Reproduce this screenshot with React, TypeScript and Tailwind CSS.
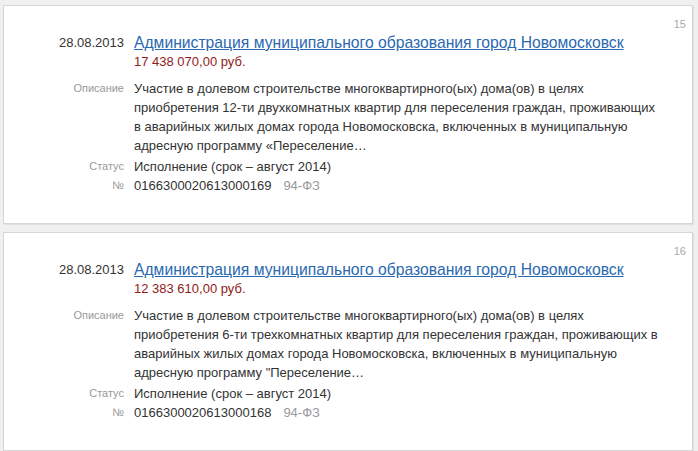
import React from "react";

type Purchase = {
  index: number;
  date: string;
  customer: string;
  price: string;
  description: string;
  status: string;
  number: string;
  law: string;
};

const purchases: Purchase[] = [
  {
    index: 15,
    date: "28.08.2013",
    customer: "Администрация муниципального образования город Новомосковск",
    price: "17 438 070,00 руб.",
    description:
      "Участие в долевом строительстве многоквартирного(ых) дома(ов) в целях приобретения 12-ти двухкомнатных квартир для переселения граждан, проживающих в аварийных жилых домах города Новомосковска, включенных в муниципальную адресную программу «Переселение…",
    status: "Исполнение (срок – август 2014)",
    number: "0166300020613000169",
    law: "94-ФЗ",
  },
  {
    index: 16,
    date: "28.08.2013",
    customer: "Администрация муниципального образования город Новомосковск",
    price: "12 383 610,00 руб.",
    description:
      "Участие в долевом строительстве многоквартирного(ых) дома(ов) в целях приобретения 6-ти трехкомнатных квартир для переселения граждан, проживающих в аварийных жилых домах города Новомосковска, включенных в муниципальную адресную программу \"Переселение…",
    status: "Исполнение (срок – август 2014)",
    number: "0166300020613000168",
    law: "94-ФЗ",
  },
];

function PurchaseCard({ item }: { item: Purchase }) {
  return (
    <div className="relative ml-[3px] mr-[5px] border border-[#d6d6d6] bg-white pt-[27px] pb-[28px] shadow-[1px_1px_1px_rgba(0,0,0,0.06)]">
      <span className="absolute right-[6px] top-[11px] text-[11px] leading-[14px] text-[#a8a8a8]">{item.index}</span>

      <div className="grid grid-cols-[120px_1fr] gap-x-[10px] text-[13px] leading-[19px]">
        {/* Date + customer */}
        <div className="text-right text-[#333]">{item.date}</div>
        <div className="text-[15.7px] leading-[19px]">
          <a href="#" className="text-[#2a68b1] underline">
            {item.customer}
          </a>
        </div>

        <div />
        <div className="text-[#921a1a]">{item.price}</div>

        {/* Description */}
        <div className="mt-[8px] text-right text-[11px] text-[#999]">Описание</div>
        <div className="mt-[8px] w-[530px] text-[#333]">{item.description}</div>

        <div className="mt-[2px] text-right text-[11px] text-[#999]">Статус</div>
        <div className="mt-[2px] text-[#333]">{item.status}</div>

        <div className="text-right text-[11px] text-[#999]">№</div>
        <div className="flex gap-[12px]">
          <span className="text-[#333]">{item.number}</span>
          <span className="text-[#999]">{item.law}</span>
        </div>
      </div>
    </div>
  );
}

export default function App() {
  return (
    <div
      className="flex h-[451px] w-[698px] flex-col gap-[8px] bg-[#f0f0f0] pt-[5px]"
      style={{ fontFamily: '"Liberation Sans", Arial, sans-serif' }}
    >
      {purchases.map((p) => (
        <PurchaseCard key={p.index} item={p} />
      ))}
    </div>
  );
}
